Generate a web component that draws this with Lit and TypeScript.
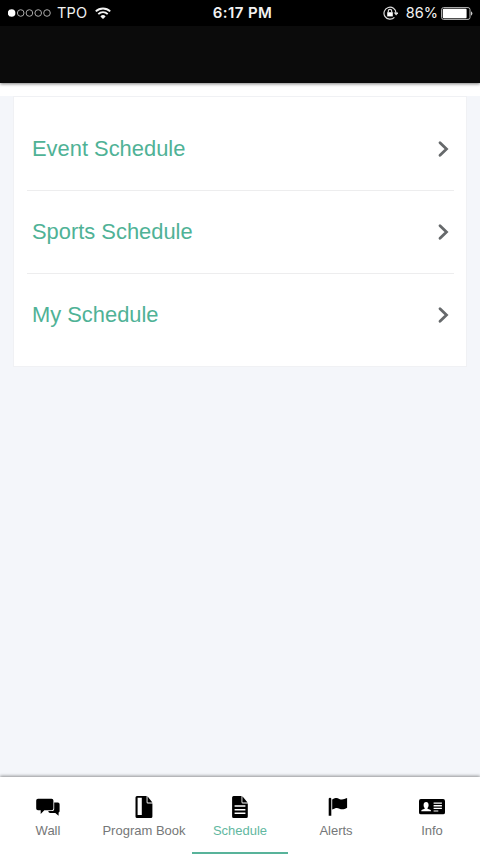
// app.ts - schedule screen with status bar, list card and bottom tabs

import {LitElement, html, css, svg} from 'lit';
import {customElement, property} from 'lit/decorators.js';
import {classMap} from 'lit/directives/class-map.js';

const icons = {
  wall: svg`
    <path d="M18.2 4.6h3.7a1.7 1.7 0 0 1 1.7 1.7v6.7a1.7 1.7 0 0 1-1 1.6v3.1l-3.3-2.8h-5.4a1.7 1.7 0 0 1-1.6-1.8h4.1a1.8 1.8 0 0 0 1.8-1.8z"/>
    <path d="M2 .7h13.6a1.8 1.8 0 0 1 1.8 1.8v8a1.8 1.8 0 0 1-1.8 1.8H8.3l-3.6 3.8v-3.800H2A1.800 1.800 0 0 1 .2 10.500v-8A1.800 1.800 0 0 1 2 .7z"/>`,
  book: svg`
    <path fill-rule="evenodd" d="M5-1.9h9.6v6.1A1.400 1.400 0 0 0 16 5.600h4.400v12.900a1.500 1.500 0 0 1-1.500 1.500H5a1.500 1.500 0 0 1-1.500-1.500V-.4A1.500 1.500 0 0 1 5-1.900zM5.600-.3v17.200h4.200V-.3z"/>
    <path d="M15.500-1.700l4.900 6.200h-4.900z"/>`,
  schedule: svg`
    <path fill-rule="evenodd" d="M5.600-1.900h7.900v6A1.500 1.500 0 0 0 15 5.600h4.800v12.900a1.500 1.500 0 0 1-1.500 1.500H5.600a1.500 1.500 0 0 1-1.500-1.500V-.4a1.500 1.500 0 0 1 1.500-1.500zM6.600 7.300v1.400h10.800V7.300zM6.600 11v1.400h10.800V11zM6.600 14.600V16h10.800v-1.400z"/>
    <path d="M14.400-1.700l5.200 6.100h-5.200z"/>`,
  alerts: svg`
    <path d="M4.700.8a1.350 1.350 0 0 1 2.600 0v17H4.700z"/>
    <path d="M8.200 1.500C12-.6 13.400 0 15.200.9c2.500 1.200 4.600.7 7.900-.8v9.700c-3 1.700-5.300 2-7.600.9-2.300-1.100-3.800-1.100-7.300.9z"/>`,
  info: svg`
    <path fill-rule="evenodd" d="M.9 1h22.200A1.900 1.900 0 0 1 25 2.900v11.500a1.900 1.900 0 0 1-1.900 1.900H.9A1.900 1.900 0 0 1-1 14.400V2.900A1.900 1.900 0 0 1 .9 1zM13.600 4.400v1.300h8.300V4.400zM13.600 7.100v1.300h8.300V7.100zM13.600 9.800v1.300h8.300V9.800zM13.600 12.400v1.200h4.700v-1.200z"/>
    <path class="cut" d="M6.100 4c1.600 0 2.500 1.200 2.500 3 0 1.400-.5 2.400-1.100 3v.8l2.700.9c.6.2.8.6.8 1.600H1.300c0-1 .2-1.400.8-1.600l2.600-.9v-.8c-.7-.6-1.100-1.600-1.100-3 0-1.800.9-3 2.500-3z"/>`,
};

type IconName = keyof typeof icons;

const tabs: {label: string; icon: IconName}[] = [
  {label: 'Wall', icon: 'wall'},
  {label: 'Program Book', icon: 'book'},
  {label: 'Schedule', icon: 'schedule'},
  {label: 'Alerts', icon: 'alerts'},
  {label: 'Info', icon: 'info'},
];

@customElement('app-status-bar')
export class AppStatusBar extends LitElement {
  static styles = css`
    :host {
      display: grid;
      grid-template-columns: 1fr auto 1fr;
      align-items: center;
      height: 26px;
      padding: 0 7px 0 8px;
      box-sizing: border-box;
      background: #000;
      color: #f2f2f2;
      font: 400 14.5px/26px Inter, sans-serif;
    }

    .left, .right {
      display: flex;
      align-items: center;
    }

    .right {
      justify-content: flex-end;
    }

    .time {
      padding-left: 4px;
      font-size: 15px;
      font-weight: 600;
      letter-spacing: 0.4px;
    }

    .carrier {
      margin: 0 8px 0 6px;
      letter-spacing: 0.2px;
    }

    .lock {
      margin-right: 8px;
    }

    .battery {
      margin-left: 3px;
    }

    svg {
      display: block;
      flex: none;
    }
  `;

  render() {
    return html`
      <div class="left">
        <svg width="43" height="10" viewBox="0 0 43 10" fill="none" stroke="#aaa">
          <circle cx="3.6" cy="5" r="3.8" fill="#fff" stroke="none"/>
          <circle cx="12.7" cy="5" r="3.3"/>
          <circle cx="21.4" cy="5" r="3.3"/>
          <circle cx="30.2" cy="5" r="3.3"/>
          <circle cx="39" cy="5" r="3.3"/>
        </svg>
        <span class="carrier">TPO</span>
        <svg width="16" height="12" viewBox="0 0 16 12" fill="none" stroke="#f4f4f4" stroke-width="1.9">
          <path d="M.8 4.4a10.3 10.3 0 0 1 14.4 0M3.3 7.1a6.7 6.7 0 0 1 9.4 0"/>
          <path d="M8 12L5.4 9.4a3.7 3.7 0 0 1 5.2 0z" fill="#f4f4f4" stroke="none"/>
        </svg>
      </div>
      <span class="time">6:17 PM</span>
      <div class="right">
        <svg class="lock" width="15" height="14" viewBox="0 0 15 14" fill="none" stroke="#ddd" stroke-width="1.2">
          <path d="M11.4 11.3A6 6 0 1 1 13 7"/>
          <path d="M10.6 6.5h5L13.1 9.5z" fill="#ddd" stroke="none"/>
          <path d="M4.2 6.2h5.6v4.2H4.2z" fill="#fff" stroke="none"/>
          <path d="M5.3 6.4V5a1.7 1.7 0 0 1 3.4 0v1.4"/>
        </svg>
        <span>86%</span>
        <svg class="battery" width="32" height="13" viewBox="0 0 32 13">
          <rect x=".6" y=".6" width="28.4" height="11.8" rx="2" fill="none" stroke="#bbb"/>
          <rect x="1.8" y="1.8" width="23.8" height="9.4" rx="1" fill="#fff"/>
          <path d="M30 4.2a2.6 2.6 0 0 1 0 4.6z" fill="#ccc"/>
        </svg>
      </div>
    `;
  }
}

@customElement('app-tabs')
export class AppTabs extends LitElement {
  @property() active = '';

  static styles = css`
    :host {
      display: flex;
      height: 77px;
      background: #fff;
      box-shadow: 0 -1px 3px rgba(0, 0, 0, 0.42);
    }

    .tab {
      display: flex;
      flex: 1;
      flex-direction: column;
      align-items: center;
      box-sizing: border-box;
      padding-top: 21px;
      border-bottom: 2px solid transparent;
      color: #757778;
      font-size: 13px;
      line-height: 16px;
      white-space: nowrap;
    }

    .active {
      border-bottom-color: #58b39a;
      color: #62b89f;
    }

    svg {
      display: block;
      margin-bottom: 7px;
      overflow: visible;
      fill: #000;
    }

    .cut {
      fill: #fff;
    }
  `;

  render() {
    return html`
      ${tabs.map(({label, icon}) => html`
        <div class=${classMap({tab: true, active: label === this.active})}>
          <svg width="24" height="18" viewBox="0 0 24 18">${icons[icon]}</svg>
          <span>${label}</span>
        </div>
      `)}
    `;
  }
}

@customElement('app-root')
export class AppRoot extends LitElement {
  static styles = css`
    :host {
      display: flex;
      flex-direction: column;
      height: 100vh;
      overflow: hidden;
      background: #f4f6fa;
      font-family: "Liberation Sans", Arial, sans-serif;
    }

    .header {
      height: 57px;
      background: #0b0b0b;
      box-shadow: 0 1px 3px rgba(0, 0, 0, 0.5);
      z-index: 1;
    }

    .strip {
      height: 13px;
      background: #fff;
    }

    main {
      flex: 1;
    }

    .card {
      margin: 0 13px;
      padding: 11px 12px 10px 13px;
      border: 1px solid #f0f1f4;
      background: #fff;
    }

    .row {
      display: flex;
      align-items: center;
      justify-content: space-between;
      height: 82px;
      padding: 0 5px;
      color: #4fb296;
      font-size: 21.9px;
    }

    .row + .row {
      border-top: 1px solid #ededee;
    }
  `;

  render() {
    return html`
      <app-status-bar></app-status-bar>
      <div class="header"></div>
      <div class="strip"></div>
      <main>
        <div class="card">
          ${['Event Schedule', 'Sports Schedule', 'My Schedule'].map((name) => html`
            <div class="row">
              <span>${name}</span>
              <svg width="11" height="18" viewBox="0 0 11 18" fill="none" stroke="#66696b" stroke-width="2.8" stroke-linecap="round">
                <path d="M2 2.7L8.5 9 2 15.3"/>
              </svg>
            </div>
          `)}
        </div>
      </main>
      <app-tabs active="Schedule"></app-tabs>
    `;
  }
}
